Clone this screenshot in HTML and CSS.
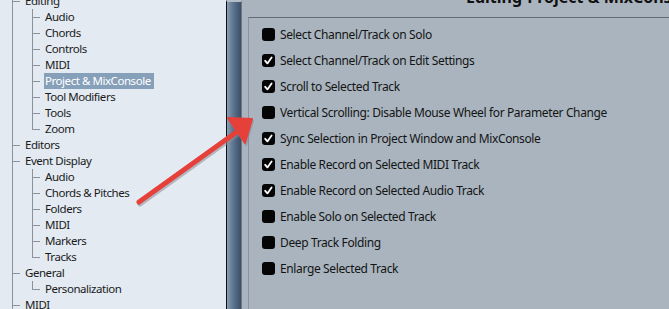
FILE: index.html
```html
<!DOCTYPE html>
<html>
    <head>
        <meta charset="utf-8">
        <title>Preferences - Editing-Project &amp; MixConsole</title>
        <link rel="stylesheet" href="styles.css">
    </head>
    <body>
        <div class="window">
            <div class="tree">
                <div class="node lvl1 open"><span class="label">Editing</span></div>
                <div class="group">
                    <div class="node lvl2"><span class="label">Audio</span></div>
                    <div class="node lvl2"><span class="label">Chords</span></div>
                    <div class="node lvl2"><span class="label">Controls</span></div>
                    <div class="node lvl2"><span class="label">MIDI</span></div>
                    <div class="node lvl2"><span class="label sel">Project &amp; MixConsole</span></div>
                    <div class="node lvl2"><span class="label">Tool Modifiers</span></div>
                    <div class="node lvl2"><span class="label">Tools</span></div>
                    <div class="node lvl2 last"><span class="label">Zoom</span></div>
                </div>
                <div class="node lvl1"><span class="label">Editors</span></div>
                <div class="node lvl1"><span class="label">Event Display</span></div>
                <div class="group">
                    <div class="node lvl2"><span class="label">Audio</span></div>
                    <div class="node lvl2"><span class="label">Chords &amp; Pitches</span></div>
                    <div class="node lvl2"><span class="label">Folders</span></div>
                    <div class="node lvl2"><span class="label">MIDI</span></div>
                    <div class="node lvl2"><span class="label">Markers</span></div>
                    <div class="node lvl2 last"><span class="label">Tracks</span></div>
                </div>
                <div class="node lvl1"><span class="label">General</span></div>
                <div class="group">
                    <div class="node lvl2 last"><span class="label">Personalization</span></div>
                </div>
                <div class="node lvl1"><span class="label">MIDI</span></div>
            </div>
            <div class="splitter"></div>
            <div class="main">
                <div class="title"><h2>Editing-Project &amp; MixConsole</h2></div>
                <div class="options">
                    <div class="opt"><span class="cb"></span>Select Channel/Track on Solo</div>
                    <div class="opt"><span class="cb on"><svg viewBox="0 0 13 13"><polyline points="3.2,6.8 5.4,9.4 9.6,3.4"/></svg></span>Select Channel/Track on Edit Settings</div>
                    <div class="opt"><span class="cb on"><svg viewBox="0 0 13 13"><polyline points="3.2,6.8 5.4,9.4 9.6,3.4"/></svg></span>Scroll to Selected Track</div>
                    <div class="opt"><span class="cb"></span>Vertical Scrolling: Disable Mouse Wheel for Parameter Change</div>
                    <div class="opt"><span class="cb on"><svg viewBox="0 0 13 13"><polyline points="3.2,6.8 5.4,9.4 9.6,3.4"/></svg></span>Sync Selection in Project Window and MixConsole</div>
                    <div class="opt"><span class="cb on"><svg viewBox="0 0 13 13"><polyline points="3.2,6.8 5.4,9.4 9.6,3.4"/></svg></span>Enable Record on Selected MIDI Track</div>
                    <div class="opt"><span class="cb on"><svg viewBox="0 0 13 13"><polyline points="3.2,6.8 5.4,9.4 9.6,3.4"/></svg></span>Enable Record on Selected Audio Track</div>
                    <div class="opt"><span class="cb"></span>Enable Solo on Selected Track</div>
                    <div class="opt"><span class="cb"></span>Deep Track Folding</div>
                    <div class="opt"><span class="cb"></span>Enlarge Selected Track</div>
                </div>
            </div>
            <!-- annotation arrow drawn over the screenshot -->
            <svg class="arrow" width="669" height="309" viewBox="0 0 669 309">
                <g transform="translate(1,2)" fill="#8a8f96" stroke="#8a8f96" opacity="0.55">
                    <line x1="139" y1="202" x2="238" y2="131" stroke-width="5" stroke-linecap="round"/>
                    <polygon points="228,118 252,119 245,143" stroke-width="2" stroke-linejoin="round"/>
                </g>
                <g fill="#e5403a" stroke="#e5403a">
                    <line x1="139" y1="202" x2="238" y2="131" stroke-width="5" stroke-linecap="round"/>
                    <polygon points="228,118 252,119 245,143" stroke-width="2" stroke-linejoin="round"/>
                </g>
            </svg>
        </div>
    </body>
</html>
```
FILE: styles.css
```css
*{
    margin: 0;
    padding: 0;
    box-sizing: border-box;
}
html,body{
    width: 669px;
    height: 309px;
    overflow: hidden;
}
body{
    font-family: "Noto Sans", "Open Sans", "Liberation Sans", sans-serif;
    font-size: 12px;
    color: #1a1a1a;
}
.window{
    position: relative;
    display: flex;
    width: 669px;
    height: 309px;
}
/* left tree */
.tree{
    width: 226px;
    height: 330px;
    margin-top: -7px;
    font-size: 11.5px;
    letter-spacing: -0.45px;
    background-color: #e3eaf2;
    background-image: linear-gradient(#8b929b, #8b929b);
    background-size: 1px 100%;
    background-position: 12px 0;
    background-repeat: no-repeat;
}
.node{
    position: relative;
    height: 16px;
    line-height: 16px;
    white-space: nowrap;
}
.node:before{
    content: '';
    position: absolute;
    top: 8px;
    height: 1px;
    width: 8px;
    background: #8b929b;
}
.lvl1{
    padding-left: 24px;
}
.lvl1:before{
    left: 12px;
}
.lvl2{
    padding-left: 44px;
}
.lvl2:before{
    left: 32px;
}
.lvl2:after{
    content: '';
    position: absolute;
    left: 32px;
    top: 0;
    width: 1px;
    height: 16px;
    background: #8b929b;
}
.lvl2.last:after{
    height: 9px;
}
.label{
    display: inline-block;
    padding: 0 3px 0 1px;
    height: 16px;
}
.label.sel{
    background: #87a0ba;
    color: #fff;
}
/* splitter */
.splitter{
    width: 16px;
    height: 100%;
    border-left: 1px solid #0d0f12;
    border-right: 1px solid #6d7782;
    background: linear-gradient(to right, #8aa0b6, #6a8098 30%, #4f6580 65%, #3e5068);
    border-top: 2px solid #b5bec8;
}
/* right panel */
.main{
    flex: 1;
    background: #a9b4bf;
    padding-left: 6px;
    display: flex;
    flex-direction: column;
    overflow: hidden;
}
.title{
    height: 17px;
    overflow: hidden;
    position: relative;
}
.title h2{
    position: absolute;
    left: 218px;
    top: -14px;
    font-size: 16px;
    font-weight: bold;
    white-space: nowrap;
    color: #111;
}
.options{
    flex: 1;
    border-top: 1px solid #5f6b78;
    border-left: 1px solid #8793a0;
    padding: 3px 0 0 13px;
}
.opt{
    display: flex;
    align-items: center;
    height: 26px;
    white-space: nowrap;
    color: #141414;
    letter-spacing: -0.37px;
}
.cb{
    display: inline-block;
    width: 13px;
    height: 13px;
    border-radius: 3px;
    background: #050505;
    margin-right: 5px;
    flex: none;
}
.cb svg{
    display: block;
    width: 13px;
    height: 13px;
}
.cb polyline{
    fill: none;
    stroke: #fff;
    stroke-width: 1.8;
    stroke-linecap: round;
    stroke-linejoin: round;
}
.arrow{
    position: absolute;
    left: 0;
    top: 0;
    pointer-events: none;
}
```
